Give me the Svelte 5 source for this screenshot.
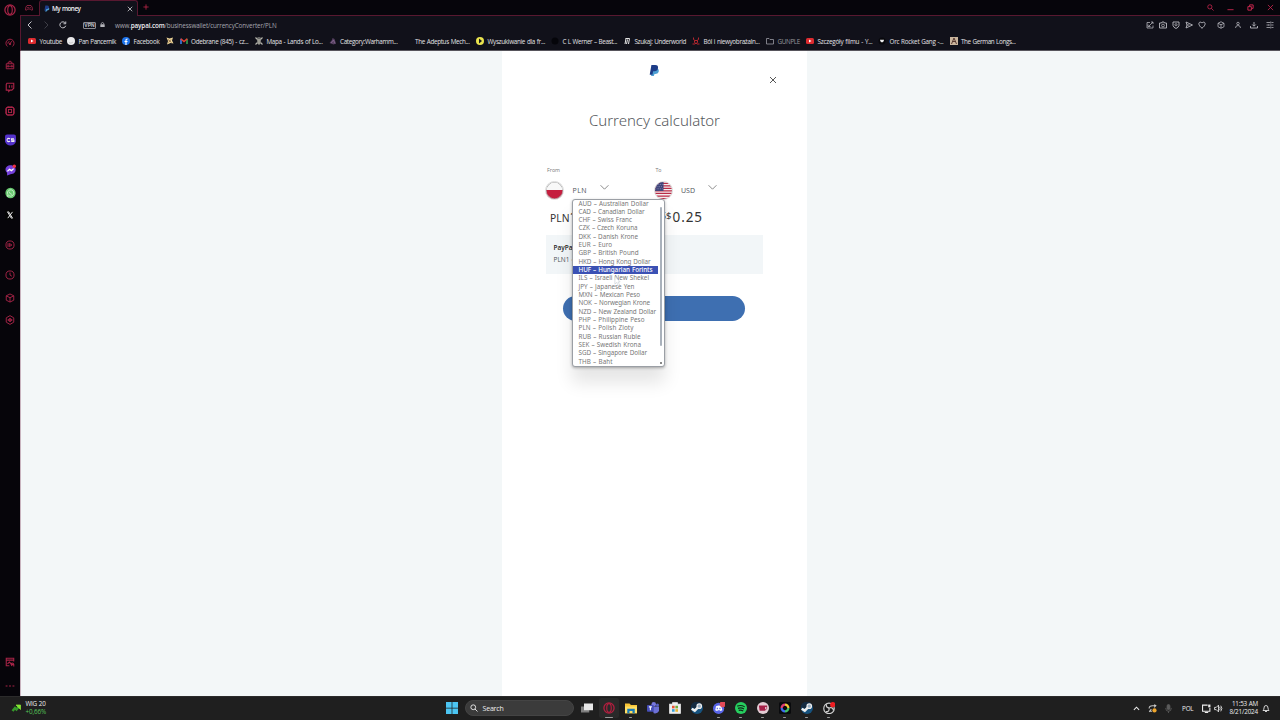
<script>
  // Spreads the letters of a label so that it fills the given width.
  function fit(node, width) {
    const natural = node.getBoundingClientRect().width;
    const count = node.textContent.length;
    node.style.letterSpacing = (width - natural) / count + 'px';
  }

  const bookmarks = [
    { icon: 'youtube', label: 'Youtube', text: 22.5, w: 39 },
    { icon: 'ball', label: 'Pan Pancernik', text: 37.5, w: 55 },
    { icon: 'facebook', label: 'Facebook', text: 26, w: 43.5 },
    { icon: 'star', label: '', text: 0, w: 14 },
    { icon: 'gmail', label: 'Odebrane (845) - cz...', text: 57.5, w: 75.5 },
    { icon: 'beetle', label: 'Mapa - Lands of Lo...', text: 56, w: 73.5 },
    { icon: 'wiki', label: 'Category:Warhamm...', text: 57.5, w: 75 },
    { icon: 'none', label: 'The Adeptus Mech...', text: 54.5, w: 72.5 },
    { icon: 'yellow', label: 'Wyszukiwanie dla fr...', text: 57.5, w: 75 },
    { icon: 'blackdot', label: 'C L Werner – Beast...', text: 54.5, w: 72 },
    { icon: 'book', label: 'Szukaj: Underworld', text: 51.5, w: 69 },
    { icon: 'chaos', label: 'Ból i niewyobrażaln...', text: 56, w: 74 },
    { icon: 'folder', label: 'GUNPLE', text: 22.5, w: 40 },
    { icon: 'youtube', label: 'Szczegóły filmu - Y...', text: 55, w: 72 },
    { icon: 'heartw', label: 'Orc Rocket Gang -...', text: 54, w: 71.5 },
    { icon: 'longs', label: 'The German Longs...', text: 54.5, w: 70 }
  ];

  const side = [
    { icon: 'opera', gap: 4 },
    { icon: 'gauge', gap: 21 },
    { icon: 'bag', gap: 10 },
    { icon: 'twitch', gap: 10 },
    { icon: 'chip', gap: 11.5 },
    { icon: 'cs', gap: 17 },
    { icon: 'messenger', gap: 18 },
    { icon: 'whatsapp', gap: 11 },
    { icon: 'x', gap: 10 },
    { icon: 'player', gap: 18 },
    { icon: 'clock', gap: 18 },
    { icon: 'cube', gap: 11 },
    { icon: 'gear', gap: 10 },
    { icon: 'gallery', gap: 330 },
    { icon: 'dots', gap: 12 }
  ];

  const currencies = [
    ['AUD – Australian Dollar', 70], ['CAD – Canadian Dollar', 66], ['CHF – Swiss Franc', 53.5],
    ['CZK – Czech Koruna', 59], ['DKK – Danish Krone', 59.5], ['EUR – Euro', 33.5],
    ['GBP – British Pound', 60], ['HKD – Hong Kong Dollar', 72], ['HUF – Hungarian Forints', 74],
    ['ILS – Israeli New Shekel', 70.5], ['JPY – Japanese Yen', 56], ['MXN – Mexican Peso', 61.5],
    ['NOK – Norwegian Krone', 71.5], ['NZD – New Zealand Dollar', 77.5], ['PHP – Philippine Peso', 66],
    ['PLN – Polish Zloty', 55], ['RUB – Russian Ruble', 62], ['SEK – Swedish Krona', 62.5],
    ['SGD – Singapore Dollar', 68.5], ['THB – Baht', 34]
  ];
  const chosen = 8;

  const tools = ['edit', 'camera', 'shield', 'send', 'heart'];
  const tools2 = [['box', 0], ['person', 4], ['download', 3], ['panel', 3]];
  const apps = [
    ['views', ''], ['operaApp', 'wide'], ['explorer', 'dot'], ['teams', ''], ['store', ''], ['steam', ''],
    ['discord', 'dot'], ['spotify', 'dot'], ['card', 'dot'], ['resolve', 'dot'], ['steam', 'dot'], ['obs', 'dot']
  ];
</script>

{#snippet icon(name)}
  <svg class="ico" viewBox="0 0 16 16" fill="none" stroke="currentColor" stroke-width="1.5">
    {#if name === 'youtube'}
      <rect x="0" y="2" width="16" height="12" rx="3" fill="#dc2b2f" stroke="none" /><path d="M6 5v6l5-3z" fill="#fff" stroke="none" />
    {:else if name === 'ball'}
      <circle cx="8" cy="8" r="8" fill="#e8e8ea" stroke="none" /><path d="M4 11q4 3 8-1" stroke="#bbb" />
    {:else if name === 'facebook'}
      <circle cx="8" cy="8" r="8" fill="#1c72ea" stroke="none" /><path d="M8 16V6.500Q8 4 11 4.300M5 9h6" stroke="#fff" stroke-width="2.300" />
    {:else if name === 'star'}
      <path d="M1 1l6 2 7-2-2 6 3 6-6-1-7 3 2-7z" fill="#efd79a" stroke="none" /><path d="M4 5l7 6M5 11l5-6" stroke="#785331" />
    {:else if name === 'gmail'}
      <path d="M2 14V3.500" stroke="#4285f4" stroke-width="3" /><path d="M14 14V3.500" stroke="#34a853" stroke-width="3" /><path d="M1.500 3.500L8 9l6.500-5.500" stroke="#e63f32" stroke-width="3.200" />
    {:else if name === 'beetle'}
      <path d="M1 1l4 4M15 1l-4 4M1 15l4-4M15 15l-4-4M5 2h6" stroke="#b7b7ae" stroke-width="2.200" /><path d="M4 4h8l-1 9-3 3-3-3z" fill="#9b9b93" stroke="none" />
    {:else if name === 'wiki'}
      <path d="M1 12l5-6 1-4 4 2 3 9-5 2z" fill="#564061" stroke="none" /><path d="M4 12l5-6 3 7" stroke="#8b6b94" />
    {:else if name === 'yellow'}
      <circle cx="8" cy="8" r="8" fill="#e9e34e" stroke="none" /><path d="M6 3v10l6-5z" fill="#14151c" stroke="none" />
    {:else if name === 'blackdot'}
      <circle cx="8" cy="8" r="7" fill="#05050a" stroke="none" />
    {:else if name === 'book'}
      <path d="M5 3h8l-2 11M6 3L4 14M9 5L7 14" stroke="#e7e7e7" stroke-width="2" />
    {:else if name === 'chaos'}
      <path d="M3 1v4l3 2h4l3-2V1M5 7v4l3 2 3-2V7M1 14h5l2-2 2 2h5" stroke="#b4262e" stroke-width="2" />
    {:else if name === 'folder'}
      <path d="M1 3h5l2 2h7v9H1z" stroke="#9b9ba3" stroke-width="1.600" />
    {:else if name === 'heartw'}
      <circle cx="8" cy="8" r="7" fill="#08080c" stroke="none" /><path d="M4 6q2-2 4 0 2-2 4 0 0 3-4 5-4-2-4-5" fill="#eee" stroke="none" />
    {:else if name === 'longs'}
      <rect width="16" height="16" fill="#c9b49c" stroke="none" /><path d="M3 14L8 2l5 12M5 9h7" stroke="#57382f" stroke-width="2" />
    {:else if name === 'opera' || name === 'operaApp'}
      <circle cx="8" cy="8" r="6.800" stroke-width="1.700" /><ellipse cx="8" cy="8" rx="3" ry="5.800" />
    {:else if name === 'gauge'}
      <path d="M4 13.500A6.500 6.500 0 1 1 12 13.500M8 9l3-4M4.500 9A3.500 3.500 0 0 1 7 5.500" /><circle cx="8" cy="9.500" r="1.200" fill="currentColor" />
    {:else if name === 'bag'}
      <path d="M2 6h12v8H2zM5 6V3.500h2V2h2v1.500h2V6M2 10h12M5 8v4M11 8v4" />
    {:else if name === 'twitch'}
      <path d="M3 2h11v8l-3 3H8l-2 2v-2H2V4zM7 5v4M11 5v4" stroke-width="1.800" />
    {:else if name === 'chip'}
      <rect x="2" y="2" width="12" height="12" rx="2" stroke-width="2" /><rect x="5.500" y="5.500" width="5" height="5" /><path d="M5 0v2M8 0v2M11 0v2M5 14v2M8 14v2M11 14v2M0 5h2M0 8h2M0 11h2M14 5h2M14 8h2M14 11h2" />
    {:else if name === 'cs'}
      <path d="M0 3q0-3 3-3h10q3 0 3 3v7q-2 6-8 6t-8-6z" fill="#5432cb" stroke="none" /><path d="M7.500 6.200Q3 4.500 3 8t4.500 1.800M13 6.200H9.500V8H13v2H9" stroke="#eee" stroke-width="1.500" />
    {:else if name === 'messenger'}
      <path d="M8 1c10 0 10 13 0 13l-5 2V12C-2 7 2 1 8 1" fill="#7541dc" stroke="none" /><path d="M3.500 10l3-3 3 2 3-3" stroke="#fff" stroke-width="2" /><circle cx="13.500" cy="2.500" r="2.500" fill="#ef3343" stroke="none" />
    {:else if name === 'whatsapp'}
      <circle cx="8" cy="8" r="7.500" fill="#68ca70" stroke="none" /><path d="M3.500 13l.8-2.600A4.600 4.600 0 1 1 6 12zM6 6q1 4 4 4" stroke="#d7f3d6" stroke-width="1.200" />
    {:else if name === 'x'}
      <rect width="16" height="16" fill="#050505" stroke="none" /><path d="M4 3h2l6 10h-2zM12 3L4.500 13" stroke="#eee" stroke-width="1.500" />
    {:else if name === 'player'}
      <circle cx="8" cy="8" r="6.500" /><path d="M7 5.500v5l4-2.500z" /><path d="M4.800 5v6" />
    {:else if name === 'clock'}
      <circle cx="8" cy="8" r="6.500" /><path d="M8 4v4l3 2" />
    {:else if name === 'cube' || name === 'box'}
      <path d="M8 1.500l6 3v7l-6 3-6-3v-7zM2 4.500l6 3 6-3M8 7.500v7" />
    {:else if name === 'gear'}
      <path d="M8 1l6 3.500v7L8 15l-6-3.500v-7z" /><path d="M4 8h8M8 5.500v5" /><circle cx="8" cy="8" r="2.300" />
    {:else if name === 'gallery'}
      <path d="M14 7V2H2v12h5M2 5h12M4 11l3-3 3 3 2-2M9 12h5v3M10 14l4-4" stroke-width="1.700" />
    {:else if name === 'dots'}
      <path d="M1 8h3M6.500 8h3M12 8h3" stroke-width="1.700" />
    {:else if name === 'game'}
      <path d="M4 3h8q3 2 3 9-2 2-4-2H5q-2 4-4 2 0-7 3-9M4.500 7h3M9.500 7h2" stroke-width="1.900" />
    {:else if name === 'paypal'}
      <path d="M5 5h7q3 1 2 5-1 3-5 3H8l-1 3H3z" fill="#4d9fd3" stroke="none" /><path d="M3.500 0H9q5 0 4 5-1 4-5 4H6l-1 5H1z" fill="#1d3c88" stroke="none" />
    {:else if name === 'close'}
      <path d="M2 2l12 12M14 2L2 14" stroke-width="1.800" />
    {:else if name === 'plus'}
      <path d="M8 1v14M1 8h14" stroke-width="2" />
    {:else if name === 'back'}
      <path d="M11 1L4 8l7 7" stroke-width="2" />
    {:else if name === 'forward'}
      <path d="M5 1l7 7-7 7" stroke-width="2" />
    {:else if name === 'reload'}
      <path d="M13.500 9.500A6 6 0 1 1 12.500 4M13.500 1v4.500H9" stroke-width="2" />
    {:else if name === 'lock'}
      <rect x="1" y="7" width="14" height="9" rx="1" fill="#b5b5bb" stroke="none" /><path d="M4 7V4q4-5 8 0v3" stroke="#b5b5bb" stroke-width="2.500" />
    {:else if name === 'search'}
      <circle cx="6.500" cy="6.500" r="4.800" stroke-width="1.800" /><path d="M10 10l5 5" stroke-width="1.800" />
    {:else if name === 'min'}
      <path d="M1 13h14" stroke-width="2" />
    {:else if name === 'restore'}
      <path d="M2 6h8v8H2zM6 6V2h8v8h-4" stroke-width="2.200" />
    {:else if name === 'edit'}
      <path d="M8 3H2v11h12V9M6 10l8-8M10 2h4v4M4 7v4h5" />
    {:else if name === 'camera'}
      <path d="M1 4h4l1-2h4l1 2h4v10H1z" stroke-width="1.800" /><circle cx="8" cy="9" r="2.800" />
    {:else if name === 'shield'}
      <path d="M2 2h12v7q-1 4-6 6-5-2-6-6z" stroke-width="1.800" /><circle cx="8" cy="7.500" r="2.200" />
    {:else if name === 'send'}
      <path d="M2 2l13 6-13 6 2-6zM4 8h5" stroke-width="1.800" />
    {:else if name === 'heart'}
      <path d="M8 14.500C-3 6 3-1 8 4c5-5 11 2 0 10.500z" stroke-width="2" />
    {:else if name === 'person'}
      <circle cx="8" cy="5" r="2.500" /><path d="M3 14q0-5 5-5t5 5" />
    {:else if name === 'download'}
      <path d="M8 2v8M4.500 7L8 10.500 11.500 7M1 10v4h14v-4" stroke-width="1.800" />
    {:else if name === 'panel'}
      <path d="M1 3h7M11 3h4M1 8h3M7 8h8M1 13h7M11 13h4M9.500 1v4M5.500 6v4M9.500 11v4" />
    {:else if name === 'chevron'}
      <path d="M1 4l7 7 7-7" stroke-width="1.500" />
    {:else if name === 'up'}
      <path d="M2 11l6-6 6 6" stroke-width="2.300" />
    {:else if name === 'windows'}
      <path d="M0 0h7.500v7.500H0zM8.500 0H16v7.500H8.500zM0 8.500h7.500V16H0zM8.500 8.500H16V16H8.500z" fill="#4cc5f2" stroke="none" />
    {:else if name === 'views'}
      <rect x="0" y="6" width="11" height="8" fill="#7e7e7e" stroke="none" /><rect x="4" y="2" width="12" height="9" fill="#e7e7e7" stroke="none" />
    {:else if name === 'explorer'}
      <path d="M0 2h6l2 2h8v11H0z" fill="#f9c637" stroke="none" /><path d="M0 6h16v9H0z" fill="#ffdf65" stroke="none" /><path d="M3 15V9h10v6h-3v-3H6v3z" fill="#197bb8" stroke="none" />
    {:else if name === 'teams'}
      <circle cx="9" cy="3" r="3" fill="#7777dd" stroke="none" /><circle cx="14" cy="4" r="2" fill="#5961c5" stroke="none" /><path d="M6 6h10v6q-2 4-7 3z" fill="#6c70d5" stroke="none" /><rect y="4" width="9" height="9" rx="1" fill="#464eb8" stroke="none" /><path d="M2.500 6.500h4M4.500 6.500V11" stroke="#fff" />
    {:else if name === 'store'}
      <path d="M1 3h14v12H1zM5 3V1h6v2" fill="#eee" stroke="#eee" /><path d="M4 5h3.500v3.500H4z" fill="#eb5235" stroke="none" /><path d="M8.500 5H12v3.500H8.500z" fill="#72ae3b" stroke="none" /><path d="M4 9.500h3.500V13H4z" fill="#36a0d8" stroke="none" /><path d="M8.500 9.500H12V13H8.500z" fill="#e9b431" stroke="none" />
    {:else if name === 'steam'}
      <circle cx="8" cy="8" r="8" fill="#16527e" stroke="none" /><path d="M0 6a8 8 0 0 1 15-2L9 7l-4 2-5-2z" fill="#142a40" stroke="none" /><path d="M1 9l4 2.500 5-5" stroke="#eee" stroke-width="3.500" /><circle cx="11" cy="5.500" r="3" fill="#9bb0c2" stroke="#eee" stroke-width="1.500" />
    {:else if name === 'discord'}
      <circle cx="7.500" cy="8.500" r="7.500" fill="#5865e8" stroke="none" /><path d="M4 5.500q4-2 7 0l1.500 5.500-2.500 1-1-1H6.500l-1 1L3 11z" fill="#fff" stroke="none" /><path d="M5 8.500h1.500M8.500 8.500H10" stroke="#5865e8" stroke-width="2" /><circle cx="13" cy="3" r="4" fill="#e44b59" stroke="none" />
    {:else if name === 'spotify'}
      <circle cx="8" cy="8" r="8" fill="#26cf5f" stroke="none" /><path d="M3 5.500q5-2 10 1M4 8.500q4-1.500 8 .8M5 11.200q3-1 6 .8" stroke="#102a18" stroke-width="1.500" />
    {:else if name === 'card'}
      <circle cx="8" cy="8" r="8" fill="#e3ced5" stroke="none" /><path d="M2.500 4.500h11v4.500l-3 2.500h-7z" fill="#a51f47" stroke="none" /><path d="M11 6.500h1.500v3H11z" fill="#eee" stroke="none" />
    {:else if name === 'resolve'}
      <rect width="16" height="16" rx="2" fill="#090a0d" stroke="none" /><path d="M8 3.500A4.500 4.500 0 0 1 12.500 8" stroke="#f3c637" stroke-width="3" /><path d="M12.500 8A4.500 4.500 0 0 1 8 12.500" stroke="#41bf67" stroke-width="3" /><path d="M8 12.500A4.500 4.500 0 0 1 3.500 8" stroke="#3d6ced" stroke-width="3" /><path d="M3.500 8A4.500 4.500 0 0 1 8 3.500" stroke="#df3d72" stroke-width="3" />
    {:else if name === 'obs'}
      <circle cx="8" cy="8.500" r="7" fill="#191919" stroke="#d2d2d2" /><path d="M8 8Q3 7 5 3M8 8q5-2 6 3M8 8q1 5-4 5" stroke="#ccc" stroke-width="1.700" /><circle cx="13" cy="3.500" r="3.500" fill="#ef1e22" stroke="none" />
    {:else if name === 'trend'}
      <path d="M0 14l5-6 3 3 6-7" stroke="#369a2b" stroke-width="5" /><path d="M7 2h9v9z" fill="#83e531" stroke="#83e531" />
    {:else if name === 'sync'}
      <path d="M2 8q0-5 6-5h5M11 1l3 2-3 3M2 14l4-5M2 13h5" stroke="#c8c8c8" stroke-width="1.800" /><circle cx="11.500" cy="11.500" r="3.800" fill="#efa62c" stroke="none" />
    {:else if name === 'mic'}
      <rect x="5.500" y="1" width="5" height="9" rx="2.500" fill="currentColor" /><path d="M3 7q0 6 5 6t5-6M8 13v3" />
    {:else if name === 'monitor'}
      <path d="M10 2H1v11h13V7M5 15h6" stroke-width="1.900" /><rect x="11" y="1" width="4" height="5" fill="currentColor" stroke="none" />
    {:else if name === 'sound'}
      <path d="M1 6h3l4-4v12l-4-4H1zM10 5q2 3 0 6M12 3q4 5 0 10" />
    {:else if name === 'bell'}
      <path d="M2 12q2-2 2-5 0-5 4-5t4 5q0 3 2 5zM6 14h4" stroke-width="1.700" />
    {/if}
  </svg>
{/snippet}

<div class="desktop">
  <div class="window">
    <aside>
      {#each side as s}
        <span class="s {s.icon}" style:margin-top="{s.gap}px">{@render icon(s.icon)}</span>
      {/each}
    </aside>
    <div class="main">
      <header class="tabs">
        <span class="gx">{@render icon('game')}</span>
        <div class="tab">
          <span class="fav">{@render icon('paypal')}</span>
          <b use:fit={28.5}>My money</b>
          <span class="tx">{@render icon('close')}</span>
        </div>
        <span class="plus">{@render icon('plus')}</span>
        <div class="winbtns">
          <span>{@render icon('search')}</span><span>{@render icon('min')}</span>
          <span>{@render icon('restore')}</span><span>{@render icon('close')}</span>
        </div>
      </header>
      <nav class="toolbar">
        <span class="nv">{@render icon('back')}</span>
        <span class="nv dim">{@render icon('forward')}</span>
        <span class="nv">{@render icon('reload')}</span>
        <span class="vpn">VPN</span>
        <span class="lock">{@render icon('lock')}</span>
        <span class="url"><span use:fit={161.5}>www.<b>paypal.com</b>/businesswallet/currencyConverter/PLN</span></span>
        <div class="tools">
          {#each tools as t}<span>{@render icon(t)}</span>{/each}
          <i></i>
          {#each tools2 as t}<span style:margin-left="{t[1]}px">{@render icon(t[0])}</span>{/each}
        </div>
      </nav>
      <nav class="marks">
        {#each bookmarks as b}
          <div class="mark" class:muted={b.icon === 'folder'} style:width="{b.w}px">
            <span class="mi">{@render icon(b.icon)}</span>
            {#if b.label}<span use:fit={b.text}>{b.label}</span>{/if}
          </div>
        {/each}
      </nav>
      <div class="page">
        <main>
          <div class="logo">{@render icon('paypal')}</div>
          <button class="close" aria-label="Close">{@render icon('close')}</button>
          <h1><span use:fit={131}>Currency calculator</span></h1>
          <div class="pair">
            <section class="col">
              <small><span use:fit={13}>From</span></small>
              <div class="pick">
                <span class="flag pl"></span>
                <span class="code"><span use:fit={14.5}>PLN</span></span>
                <span class="chev">{@render icon('chevron')}</span>
              </div>
              <div class="amount"><span class="pre">PLN</span><span>1</span></div>
              <div class="menu">
                <ul>
                  {#each currencies as c, i}
                    <li class:on={i === chosen}><span use:fit={c[1]}>{c[0]}</span></li>
                  {/each}
                </ul>
                <span class="thumb"></span>
                <span class="grip"></span>
                <svg class="pointer" viewBox="0 0 8 12"><path d="M1 0v9l2-2 2 4 1.500-1-2-3.500H7z" fill="#fff" stroke="#b9c1c8" stroke-width=".6" /></svg>
              </div>
            </section>
            <section class="col">
              <small><span use:fit={6}>To</span></small>
              <div class="pick">
                <span class="flag">
                  <svg viewBox="0 0 20 20">
                    <rect width="20" height="20" fill="#f4eef0" />
                    <path d="M0 1.500h20M0 4.500h20M0 7.500h20M0 10.500h20M0 13.500h20M0 16.500h20M0 19.500h20" stroke="#b92b45" stroke-width="1.500" />
                    <rect width="10" height="10.500" fill="#3e4379" />
                    <path d="M2 3h7M1 5.500h8M2 8h7" stroke="#a5a9ca" stroke-width=".8" stroke-dasharray="1 1" />
                  </svg>
                </span>
                <span class="code"><span use:fit={14}>USD</span></span>
                <span class="chev">{@render icon('chevron')}</span>
              </div>
              <div class="amount usd"><sup>US$</sup><span use:fit={30.5}>0.25</span></div>
            </section>
          </div>
          <div class="info">
            <strong>PayPal's rate</strong>
            <span>PLN1 = 0.25 USD</span>
          </div>
          <button class="go" aria-label="Done"></button>
        </main>
      </div>
    </div>
  </div>
  <footer>
    <div class="widget">
      <span class="trend">{@render icon('trend')}</span>
      <div><p><span use:fit={20}>WIG 20</span></p><p class="green"><span use:fit={20.5}>+0,66%</span></p></div>
    </div>
    <div class="center">
      <span class="win">{@render icon('windows')}</span>
      <div class="search"><span class="mag">{@render icon('search')}</span><span use:fit={21}>Search</span></div>
      {#each apps as a}
        <span class="app {a[0]}">{@render icon(a[0])}{#if a[1]}<i class={a[1]}></i>{/if}</span>
      {/each}
    </div>
    <div class="tray">
      <span class="ti up">{@render icon('up')}</span>
      <span class="ti">{@render icon('sync')}</span>
      <span class="ti mic">{@render icon('mic')}</span>
      <span class="pol"><span use:fit={11.5}>POL</span></span>
      <span class="ti mon">{@render icon('monitor')}</span>
      <span class="ti snd">{@render icon('sound')}</span>
      <div class="time"><p><span use:fit={26}>11:53 AM</span></p><p><span use:fit={28.5}>8/21/2024</span></p></div>
      <span class="ti bell">{@render icon('bell')}</span>
    </div>
  </footer>
</div>

<style>
  :global(body) { margin: 0; overflow: hidden; background: #06050a; }
  * { box-sizing: border-box; }
  p, h1, ul { margin: 0; padding: 0; }
  .desktop { width: 1280px; height: 720px; display: flex; flex-direction: column; font: 500 6.300px/9px "Open Sans", "Noto Sans", sans-serif; word-spacing: .5px; white-space: nowrap; }
  .desktop :global(svg.ico) { display: block; width: 100%; height: 100%; }
  .window { display: flex; height: 696px; }
  aside { width: 20px; height: 696px; background: #06050a; display: flex; flex-direction: column; align-items: center; color: #a82447; }
  .s { width: 10px; height: 12px; flex: none; }
  .s.opera { width: 12px; }
  .s.cs, .s.messenger, .s.whatsapp { width: 11px; }
  .s.x { width: 10px; }
  .main { width: 1260px; display: flex; flex-direction: column; }
  .tabs { height: 16px; background: #06050b; border-bottom: 1px solid #581830; display: flex; align-items: center; color: #c9284f; }
  .gx { width: 8px; height: 8px; margin-left: 5px; color: #8d2342; }
  .tab { width: 99px; height: 16px; margin: 0 0 -1px 6px; background: #11111a; border: 1px solid #581830; border-width: 1px 1px 0; border-radius: 3px 3px 0 0; display: flex; align-items: center; color: #f1f1f3; }
  .fav { width: 6px; height: 7px; margin: 0 2px 0 4px; }
  .tab b { font-weight: 600; margin-top: -1px; }
  .tx { width: 6px; height: 6px; margin: 0 4px 0 auto; }
  .plus { width: 6px; height: 6px; margin: -1px 0 0 5px; }
  .winbtns { margin-left: auto; display: flex; gap: 13px; padding-right: 6.500px; }
  .winbtns span { width: 7px; height: 7px; }
  .toolbar { height: 18px; background: #11111a; border-left: 1px solid #581830; display: flex; align-items: center; color: #c5c5cb; padding-bottom: 1px; }
  .nv { width: 8px; height: 8px; margin: 0 8px 0 0; }
  .nv:first-child { margin-left: 5px; }
  .nv:nth-child(3) { margin-left: 1px; }
  .dim { color: #3d3d46; }
  .vpn { width: 13px; height: 7px; border: 1px solid #8c8c93; border-radius: 1px; font: bold 5px/5px "Liberation Sans", sans-serif; text-align: center; margin: 1px 4px 0 8px; }
  .lock { width: 5px; height: 7px; margin-right: 10px; }
  .url { color: #a6a6ae; margin-top: 1px; }
  .url b { color: #f0f0f2; font-weight: 600; }
  .tools { margin: 1px 6px 0 auto; display: flex; gap: 5px; color: #b9b9c0; }
  .tools span { width: 8px; height: 8px; }
  .tools i { width: 1px; }
  .marks { height: 17px; background: #11111a; border-left: 1px solid #581830; border-bottom: 1px solid #57555c; display: flex; align-items: center; padding: 0 0 2px 7px; color: #e2e2e5; }
  .mark { display: flex; align-items: center; flex: none; }
  .muted { color: #96969e; }
  .mi { width: 8px; height: 8px; margin-right: 3.500px; flex: none; }
  .page { height: 645px; background: #f3f7f8; border-left: 1px solid #c9b4bf; display: flex; justify-content: center; }
  main { width: 305px; margin-right: -8px; height: 645px; background: #fff; padding: 13px 44px 0; position: relative; color: #4d5257; }
  .logo { width: 11px; height: 13px; margin: 0 auto; }
  .close { display: block; border: 0; background: none; padding: 0; width: 8px; height: 8px; margin: -1px 0 0 auto; position: relative; left: 14px; color: #444; }
  h1 { font: 350 15px/22px "Noto Sans", "Open Sans", sans-serif; margin-top: 25px; text-align: center; color: #54585c; }
  .pair { display: flex; margin-top: 35px; }
  .col { width: 108.800px; position: relative; }
  small { display: block; font-size: 5.300px; line-height: 9px; padding-left: 1px; color: #777; }
  .pick { display: flex; align-items: center; height: 22px; margin-top: 4px; }
  .flag { width: 19px; height: 19px; border-radius: 50%; overflow: hidden; margin-left: -1px; box-shadow: inset 0 0 0 .6px #aaa; border: .5px solid #ddd; flex: none; }
  .flag svg { display: block; width: 100%; height: 100%; }
  .pl { background: linear-gradient(#f8f8f8 50%, #c51e3f 50%); }
  .code { width: 27px; margin-left: 8.500px; font-size: 7px; }
  .chev { width: 9px; height: 9px; margin-top: -6px; color: #777; }
  .amount { font: 400 13.500px/20px "Noto Sans", sans-serif; height: 20px; margin-top: 5.500px; display: flex; align-items: baseline; padding-left: 4px; color: #333; }
  .pre { font-size: 10.300px; }
  .usd { padding-left: 1px; }
  .usd sup { font-size: 9.500px; line-height: 9px; width: 16px; text-align: right; margin-right: 1px; display: flex; justify-content: flex-end; vertical-align: baseline; transform: translateY(-3px); }
  .info { width: 217px; height: 39px; margin-top: 8px; background: #f2f6f8; padding: 8px 7.500px; display: flex; flex-direction: column; gap: 3px; font-size: 6.500px; }
  .info strong { font-weight: 600; color: #222; }
  .go { display: block; width: 182px; height: 25px; border: 0; border-radius: 13px; background: #3e6fb1; margin: 22.500px 0 0 17px; }
  .menu { position: absolute; z-index: 2; left: 26px; top: 32.500px; width: 92.500px; height: 168px; background: #fff; border: 1px solid #9b9fa5; border-radius: 3px; box-shadow: 0 16px 17px rgba(0,0,0,.1), 0 1px 3px rgba(0,0,0,.3); overflow: visible; }
  ul { list-style: none; height: 166px; overflow: hidden; font: 450 6.300px/8.340px "Noto Sans", sans-serif; color: #777; }
  li { height: 8.340px; padding-left: 5.500px; width: 85px; }
  .on { background: #3b51b4; color: #fff; font-weight: 500; }
  .thumb { position: absolute; right: 2px; top: 7px; width: 2px; height: 139px; background: #a9b1bb; border-radius: 1px; }
  .grip { position: absolute; right: 2px; bottom: 2px; width: 2px; height: 2px; background: #888; }
  .pointer { position: absolute; left: 41px; top: 76px; width: 7px; height: 11px; opacity: .9; }
  footer { height: 24px; background: #1f1f1f; border-top: 1px solid #2b2b2b; display: flex; align-items: center; color: #eee; padding-bottom: 1px; }
  .widget { width: 446px; display: flex; align-items: center; line-height: 8px; }
  .trend { width: 11px; height: 8px; margin: 0 4px 0 10.500px; }
  .green { color: #57c759; }
  .center { display: flex; align-items: center; height: 22px; margin-left: -.5px; }
  .win { width: 12px; height: 12px; margin-right: 7px; }
  .search { width: 109px; height: 16px; border-radius: 8px; background: #3b3b3b; border: 1px solid #444; display: flex; align-items: center; margin-right: 2px; font-size: 7px; }
  .mag { width: 8px; height: 8px; margin: 0 5px 0 4px; }
  .app { width: 20px; height: 20px; margin: 0 1px; padding: 4px; position: relative; flex: none; }
  .operaApp { background: #292929; border-radius: 2px; color: #b51e3f; }
  .app i { position: absolute; bottom: 0; left: 8.500px; width: 3px; height: 1.500px; border-radius: 1px; background: #999; }
  .app i.wide { width: 8px; left: 6px; }
  .tray { margin-left: auto; display: flex; align-items: center; padding-right: 10px; }
  .ti { width: 9px; height: 9px; margin-right: 7.500px; }
  .up { width: 7px; height: 7px; margin-right: 8px; }
  .mic { color: #5c5c5c; margin-right: 9px; }
  .pol { width: 19.500px; }
  .mon { margin-right: 3px; }
  .snd { margin-right: 6.500px; }
  .time { width: 29px; margin-right: 4px; text-align: right; line-height: 8.500px; }
  .bell { margin: 0; width: 8px; }
</style>
